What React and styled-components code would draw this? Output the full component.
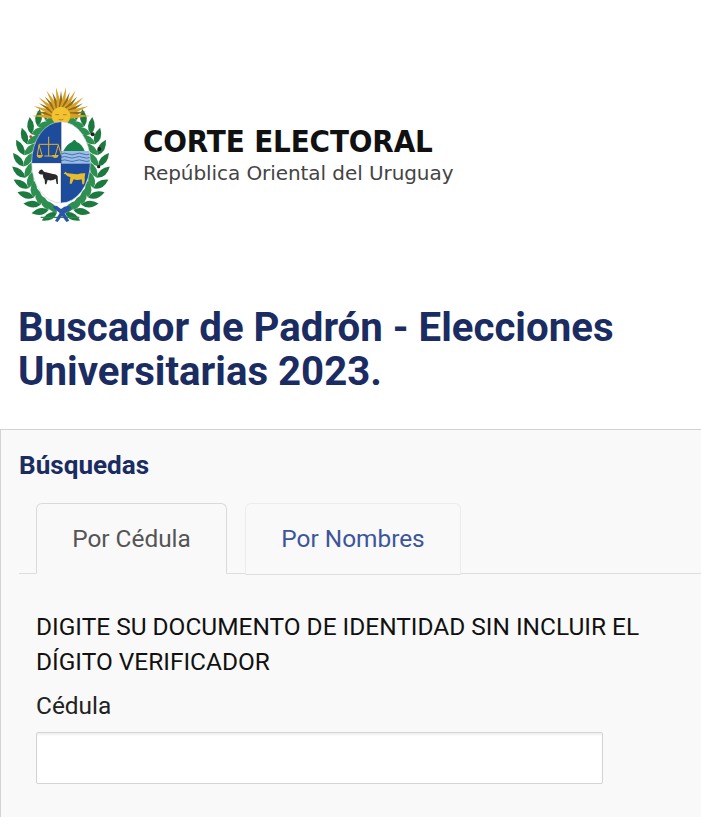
import React from "react";
import styled, { createGlobalStyle } from "styled-components";

const GlobalStyle = createGlobalStyle`
  html, body {
    margin: 0;
    padding: 0;
    background: #fff;
    overflow: hidden;
  }
  body {
    font-family: Roboto, "Liberation Sans", sans-serif;
  }
`;

const Page = styled.div`
  width: 701px;
  height: 817px;
  overflow: hidden;
`;

const Header = styled.header`
  display: flex;
  align-items: flex-start;
  padding-top: 80px;
  height: 150px;
`;

const LogoText = styled.div`
  margin: 43px 0 0 13px;
  font-family: "DejaVu Sans", sans-serif;
  color: #111;
`;

const LogoTitle = styled.div`
  font-family: "DejaVu Sans Condensed", "DejaVu Sans", sans-serif;
  font-size: 31px;
  line-height: 36px;
  font-weight: 700;
  letter-spacing: -0.15px;
  white-space: nowrap;
`;

const LogoSub = styled.div`
  margin-top: 2px;
  font-size: 20px;
  line-height: 24px;
  color: #444;
  letter-spacing: -0.07px;
  white-space: nowrap;
`;

const Title = styled.h1`
  margin: 76px 0 0;
  padding: 0 18px;
  font-size: 40.2px;
  line-height: 44px;
  font-weight: 700;
  color: #1a2c61;
`;

const Panel = styled.section`
  margin-top: 35px;
  height: 400px;
  background: #f9f9f9;
  border-top: 1px solid #d3d3d3;
  border-left: 1px solid #d3d3d3;
  padding: 20px 0 0 18px;
`;

const PanelTitle = styled.h2`
  margin: 0;
  font-size: 26.1px;
  line-height: 30px;
  font-weight: 700;
  color: #1a2c61;
`;

const Tabs = styled.div`
  display: flex;
  gap: 18px;
  margin-top: 23px;
  padding-left: 17px;
  height: 70px;
  border-bottom: 1px solid #dedede;
`;

const Tab = styled.div`
  box-sizing: border-box;
  width: ${(p) => p.$width}px;
  height: ${(p) => (p.$active ? 71 : 72)}px;
  padding-bottom: ${(p) => (p.$active ? 0 : 1)}px;
  display: flex;
  align-items: center;
  justify-content: center;
  font-size: 24.4px;
  color: ${(p) => (p.$active ? "#555" : "#3d559b")};
  border: 1px solid ${(p) => (p.$active ? "#dadada" : "#ececec")};
  border-bottom: ${(p) => (p.$active ? "1px solid #f9f9f9" : "1px solid #dedede")};
  border-radius: 6px 6px 0 0;
  background: #f9f9f9;
`;

const Form = styled.div`
  padding: 35px 0 0 17px;
`;

const Notice = styled.p`
  margin: 0;
  width: 640px;
  font-size: 24.45px;
  line-height: 35px;
  color: #111;
`;

const Label = styled.label`
  display: block;
  margin-top: 9px;
  font-size: 24.4px;
  line-height: 35px;
  color: #222;
`;

const Input = styled.input`
  display: block;
  box-sizing: border-box;
  width: 567px;
  height: 52px;
  margin-top: 9px;
  border: 1px solid #d4d4d4;
  border-radius: 2px;
  background: #fff;
  box-shadow: inset 0 2px 2px rgba(0, 0, 0, 0.06);
  outline: none;
`;

const Emblem = styled.svg`
  flex: none;
  width: 130px;
  height: 150px;
`;

// laurel branches: pairs of leaves following an oval around the shield
const leaves = [];
[-1, 1].forEach((side) => {
  for (let i = 0; i < 13; i++) {
    const t = ((84 - i * 13.5) * Math.PI) / 180;
    const x = 183 + side * 112 * Math.cos(t);
    const y = 252 + 146 * Math.sin(t);
    const dirX = side * 112 * Math.sin(t);
    const dirY = -146 * Math.cos(t);
    const rot = (Math.atan2(dirX, -dirY) * 180) / Math.PI;
    leaves.push({ x, y, rot: rot + 36, shade: side === 1 ? "#1c7a40" : "#2f8f50", key: `${side}-${i}-a` });
    leaves.push({ x, y, rot: rot - 36, shade: side === 1 ? "#2f8f50" : "#1c7a40", key: `${side}-${i}-b` });
  }
});

const rays = [];
for (let i = 0; i < 19; i++) {
  rays.push({ a: -90 + i * 10, long: i % 2 === 0, key: i });
}

function CoatOfArms() {
  return (
    <Emblem viewBox="0 0 390 450" aria-hidden="true">
      <defs>
        <clipPath id="shield">
          <ellipse cx="183" cy="247" rx="88" ry="122" />
        </clipPath>
      </defs>
      {leaves.map((l) => (
        <path
          key={l.key}
          d="M0 0 Q-20 -22 0 -52 Q20 -22 0 0Z"
          fill={l.shade}
          transform={`translate(${l.x} ${l.y}) rotate(${l.rot})`}
        />
      ))}
      <circle cx="278" cy="163" r="6" fill="#222" />
      <circle cx="298" cy="207" r="6" fill="#222" />
      <circle cx="296" cy="260" r="5" fill="#222" />
      <circle cx="92" cy="170" r="4" fill="#b5443c" />
      {rays.map((r) => (
        <path
          key={r.key}
          d={r.long ? "M-8 -26 L0 -88 L8 -26Z" : "M-7 -26 L0 -76 L7 -26Z"}
          fill={r.long ? "#d9a021" : "#8f6d20"}
          transform={`translate(183 108) rotate(${r.a})`}
        />
      ))}
      <circle cx="183" cy="108" r="28" fill="#f2c230" />
      <path d="M166 104h11M189 104h11M176 118q7 4 14 0" stroke="#a97a16" strokeWidth="2.5" fill="none" />
      <g clipPath="url(#shield)">
        <rect x="90" y="120" width="93" height="130" fill="#1d4c9c" />
        <rect x="183" y="120" width="93" height="95" fill="#fff" />
        <rect x="90" y="250" width="93" height="125" fill="#fff" />
        <rect x="183" y="250" width="93" height="125" fill="#1d4c9c" />
        <rect x="183" y="213" width="93" height="37" fill="#9dbde2" />
        <path
          d="M183 222q11 -5 22 0t22 0t22 0t22 0M183 232q11 -5 22 0t22 0t22 0t22 0M183 242q11 -5 22 0t22 0t22 0t22 0"
          stroke="#3f74bb"
          strokeWidth="3"
          fill="none"
        />
        <path d="M190 213q12 -22 26 -27q8 -12 14 0q16 6 24 27Z" fill="#18824a" />
        <rect x="182" y="120" width="3" height="250" fill="#27406f" opacity="0.5" />
      </g>
      <ellipse cx="183" cy="247" rx="88" ry="122" fill="none" stroke="#c9d2de" strokeWidth="2" />
      <g stroke="#e0b32c" strokeWidth="3" fill="none">
        <path d="M146 170v58M116 193h60M133 228h26M117 195l-5 30M117 195l9 30M175 195l-9 30M175 195l9 30" />
      </g>
      <path d="M110 225h19q-2 9 -10 9t-9 -9ZM156 225h20q-2 9 -10 9t-10 -9Z" fill="#e0b32c" />
      <path
        d="M115 278q5 -12 12 -9l5 6 27 7q10 0 14 6l1 24h-4l-3 -16q-10 8 -24 4l-4 13h-4l-1 -14q-5 -4 -6 -16q-7 3 -13 -5Z"
        fill="#2a2a2a"
      />
      <path
        d="M191 282l5 -7 6 5 30 3q12 -4 24 -3l-2 11q2 8 -2 22h-5l-2 -15q-14 4 -24 0l-6 13h-6l2 -19q-11 -3 -14 -9Z"
        fill="#e8bd2c"
      />
      <path d="M122 412h116" stroke="#2f8a4d" strokeWidth="4" />
      <path d="M160 384q-2 -9 11 -6l12 9q12 -11 23 -9 11 1 5 11l-17 11 14 22 -9 4 -13 -18 -13 18 -8 -3 14 -24Z" fill="#2a55a8" />
    </Emblem>
  );
}

function App() {
  return (
    <Page>
      <GlobalStyle />
      <Header>
        <CoatOfArms />
        <LogoText>
          <LogoTitle>CORTE ELECTORAL</LogoTitle>
          <LogoSub>República Oriental del Uruguay</LogoSub>
        </LogoText>
      </Header>
      <Title>Buscador de Padrón - Elecciones Universitarias 2023.</Title>
      <Panel>
        <PanelTitle>Búsquedas</PanelTitle>
        <Tabs>
          <Tab $active $width={191}>Por Cédula</Tab>
          <Tab $width={216}>Por Nombres</Tab>
        </Tabs>
        <Form>
          <Notice>DIGITE SU DOCUMENTO DE IDENTIDAD SIN INCLUIR EL DÍGITO VERIFICADOR</Notice>
          <Label>Cédula</Label>
          <Input type="text" />
        </Form>
      </Panel>
    </Page>
  );
}

export default App;
